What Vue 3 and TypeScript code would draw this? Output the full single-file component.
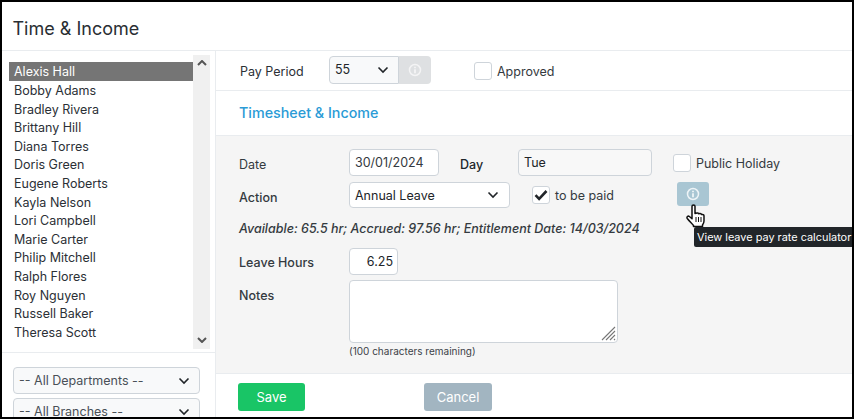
<script setup lang="ts">
const people: string[] = [
  'Alexis Hall', 'Bobby Adams', 'Bradley Rivera', 'Brittany Hill', 'Diana Torres',
  'Doris Green', 'Eugene Roberts', 'Kayla Nelson', 'Lori Campbell', 'Marie Carter',
  'Philip Mitchell', 'Ralph Flores', 'Roy Nguyen', 'Russell Baker', 'Theresa Scott',
]
</script>

<template>
  <div class="frame">
    <header class="title"><h1>Time &amp; Income</h1></header>
    <div class="body">
      <aside class="side">
        <div class="list-wrap">
          <ul class="list">
            <li v-for="(p, i) in people" :key="p" :class="{ sel: i === 0 }">{{ p }}</li>
          </ul>
          <div class="scroll">
            <svg width="10" height="6" viewBox="0 0 10 6"><path d="M1 5l4-4 4 4" fill="none" stroke="#555" stroke-width="2"/></svg>
            <svg width="10" height="6" viewBox="0 0 10 6"><path d="M1 1l4 4 4-4" fill="none" stroke="#555" stroke-width="2"/></svg>
          </div>
        </div>
        <div class="filters">
          <div class="select filter">-- All Departments --<svg class="chev" width="12" height="8" viewBox="0 0 12 8"><path d="M1.5 1.5L6 6l4.500-4.500" fill="none" stroke="#212529" stroke-width="1.600"/></svg></div>
          <div class="select filter">-- All Branches --<svg class="chev" width="12" height="8" viewBox="0 0 12 8"><path d="M1.5 1.5L6 6l4.500-4.500" fill="none" stroke="#212529" stroke-width="1.600"/></svg></div>
        </div>
      </aside>

      <main class="main">
        <div class="period">
          <span class="period-label">Pay Period</span>
          <div class="period-group">
            <div class="select period-select">55<svg class="chev" width="12" height="8" viewBox="0 0 12 8"><path d="M1.5 1.5L6 6l4.500-4.500" fill="none" stroke="#212529" stroke-width="1.600"/></svg></div>
            <span class="period-info">
              <svg width="14" height="14" viewBox="0 0 14 14"><circle cx="7" cy="7" r="5.500" fill="none" stroke="#f4f4f5" stroke-width="1.500"/><path d="M7 3.800v1.400M7 6.200v4" stroke="#f4f4f5" stroke-width="1.800"/></svg>
            </span>
          </div>
          <label class="check approved"><span class="box"></span><span class="check-text">Approved</span></label>
        </div>

        <h2 class="section">Timesheet &amp; Income</h2>

        <section class="panel">
          <div class="row row-date">
            <span class="label">Date</span>
            <div class="field date">30/01/2024</div>
            <span class="day-label">Day</span>
            <div class="field day">Tue</div>
            <label class="check holiday"><span class="box"></span><span class="check-text">Public Holiday</span></label>
          </div>
          <div class="row row-action">
            <span class="label medium">Action</span>
            <div class="select action">Annual Leave<svg class="chev" width="12" height="8" viewBox="0 0 12 8"><path d="M1.5 1.5L6 6l4.500-4.500" fill="none" stroke="#212529" stroke-width="1.600"/></svg></div>
            <label class="check paid">
              <span class="box">
                <svg width="14" height="12" viewBox="0 0 14 12"><path d="M1.500 6.200l3.600 3.600L12.500 2" fill="none" stroke="#212529" stroke-width="2.600"/></svg>
              </span>to be paid
            </label>
            <span class="calc">
              <svg width="14" height="14" viewBox="0 0 14 14"><circle cx="7" cy="7" r="5.500" fill="none" stroke="#eef4f7" stroke-width="1.500"/><path d="M7 3.800v1.400M7 6.200v4" stroke="#eef4f7" stroke-width="1.800"/></svg>
            </span>
          </div>
          <p class="avail">Available: 65.5 hr; Accrued: 97.56 hr; Entitlement Date: 14/03/2024</p>
          <div class="row row-hours">
            <span class="label medium">Leave Hours</span>
            <div class="field hours">6.25</div>
          </div>
          <div class="row row-notes">
            <span class="label medium notes-label">Notes</span>
            <div class="notes-col">
              <div class="notes">
                <svg class="grip" width="15" height="15" viewBox="0 0 15 15"><path d="M14 1L1 14M14 5L5 14M14 9L9 14M14 13l-1 1" stroke="#777" stroke-width="1.100"/></svg>
              </div>
              <small class="remain">(100 characters remaining)</small>
            </div>
          </div>
        </section>

        <footer class="actions">
          <button class="btn save">Save</button>
          <button class="btn cancel">Cancel</button>
        </footer>

        <!-- pointer + tooltip sit over the form -->
        <svg class="hand" width="19" height="24" viewBox="0 0 19 24">
          <path d="M6 2.200C6 .6 9 .6 9 2.200V9.500l2-.5c1-.2 1.500.3 1.500.8l1.500-.2c1-.1 1.400.5 1.400 1l1-.1c1-.1 1.600.6 1.600 1.500v5c0 1.500-.6 2.700-1.500 4v1.500H7.500V21.500C6 19.500 3.500 17.500 1.300 14.500c-1-1.500.7-3 2.100-2l2.600 2.200z" fill="#fff" stroke="#111" stroke-width="1.500" stroke-linejoin="round"/>
          <path d="M10 13v5M12.500 13v5M15 13v5" stroke="#111" stroke-width="1"/>
        </svg>
        <div class="tip">View leave pay rate calculator</div>
      </main>
    </div>
  </div>
</template>

<style>
html, body { margin: 0; background: #fff; }
</style>

<style scoped>
* { box-sizing: border-box; }
.frame {
  width: 854px;
  height: 419px;
  overflow: hidden;
  border: 2px solid #000;
  background: #fff;
  font-family: Inter, "Liberation Sans", sans-serif;
  font-size: 12.5px;
  color: #212529;
  display: flex;
  flex-direction: column;
}
.title {
  height: 49px;
  flex: none;
  border-bottom: 1px solid #e9ecef;
  padding: 15px 0 0 10.500px;
}
h1 { margin: 0; font-size: 18px; line-height: 24px; font-weight: 400; color: #2a2e33; }
.body { flex: 1; display: flex; min-height: 0; }

.side { width: 214px; flex: none; border-right: 1px solid #e9ecef; }
.list-wrap { height: 302px; border-bottom: 1px solid #e9ecef; display: flex; padding: 4px 4px 0 7px; }
.list { list-style: none; margin: 7px 0 0; padding: 0; width: 184px; flex: none; }
.list li { height: 18.600px; line-height: 18.600px; padding: 1px 0 0 5px; color: #2b3036; white-space: nowrap; }
.list li.sel { background: #757575; color: #fff; height: 19px; }
.scroll {
  width: 17px; height: 294px; background: #f0f0f0;
  display: flex; flex-direction: column; justify-content: space-between; align-items: center;
  padding: 5px 0 6px;
}
.filters { padding: 14px 0 0 11px; display: flex; flex-direction: column; gap: 4px; }

.select {
  position: relative;
  height: 27px; line-height: 25px;
  border: 1px solid #ced4da; border-radius: 4px;
  padding-left: 5px; background: #f8f9fa;
  white-space: nowrap;
}
.chev { position: absolute; right: 9px; top: 9px; }
.filter { width: 187px; color: #495057; }

.main { flex: 1; position: relative; display: flex; flex-direction: column; min-width: 0; }
.period { height: 40px; flex: none; border-bottom: 1px solid #e9ecef; display: flex; align-items: center; padding-left: 24px; }
.period-label { width: 89px; color: #2b3036; padding-top: 2px; }
.period-group { display: flex; height: 28px; margin-top: -2px; }
.period-select { width: 70px; height: 28px; line-height: 25px; border-radius: 4px 0 0 4px; }
.period-info { width: 32px; background: #dee0e2; border-radius: 0 4px 4px 0; display: flex; align-items: center; justify-content: center; }
.approved { margin-left: 43px; }
.check { display: flex; align-items: center; gap: 5px; color: #343a40; }
.check-text { padding-top: 2px; }
.box { width: 18px; height: 18px; border: 1px solid #ced4da; border-radius: 3px; background: #fff; display: flex; align-items: center; justify-content: center; flex: none; }

.section { margin: 0; height: 45px; flex: none; padding: 13px 0 0 23px; font-size: 14.300px; line-height: 18px; font-weight: 500; color: #2a9bd6; border-bottom: 1px solid #e9ecef; }

.panel { height: 238px; flex: none; background: #f5f5f5; border-bottom: 1px solid #e9ecef; padding: 13px 0 0 23px; }
.row { display: flex; align-items: center; }
.label { width: 110px; flex: none; color: #343a40; padding-top: 2px; }
.row-date .label { padding-top: 4px; }
.medium { font-weight: 500; }
.field { height: 27px; line-height: 25px; border: 1px solid #ced4da; border-radius: 4px; background: #fff; padding-left: 5px; }
.date { width: 90px; color: #343a40; }
.day-label { width: 58px; margin-left: 21px; font-weight: 500; padding-top: 4px; }
.day { width: 134px; background: #f8f8f8; }
.holiday { margin-left: 21px; }
.row-action { margin-top: 6px; height: 26px; }
.row-action .label { padding-top: 4px; }
.action { width: 161px; height: 26px; line-height: 25px; background: #fff; }
.action .chev { right: 10px; top: 8px; }
.paid { margin-left: 22px; }
.calc { margin-left: 63px; margin-top: -3px; width: 32px; height: 24px; background: #a9c6d3; border-radius: 3px; display: flex; align-items: center; justify-content: center; }
.avail { margin: 12px 0 0; line-height: 18px; font-style: italic; font-weight: 500; color: #343a40; font-size: 12.500px; }
.row-hours { margin-top: 9px; height: 28px; }
.hours { width: 49px; height: 27px; text-align: right; padding-right: 4px; }
.row-notes { margin-top: 5px; align-items: flex-start; }
.notes-label { padding-top: 8px; }
.notes { width: 269px; height: 63px; border: 1px solid #ced4da; border-radius: 4px; background: #fff; position: relative; }
.grip { position: absolute; right: 1px; bottom: 1px; }
.remain { display: block; font-size: 10px; line-height: 14px; color: #3c4248; margin-top: 1px; padding-left: 0; }

.actions { flex: 1; display: flex; padding: 9px 0 0 22px; gap: 119px; align-items: flex-start; }
.btn { border: 0; border-radius: 3px; height: 28px; color: #fff; font: 400 13px Inter, "Liberation Sans", sans-serif; }
.save { width: 67px; background: #19c566; }
.cancel { width: 68px; background: #a2b5c1; }

.hand { position: absolute; left: 470px; top: 153px; }
.tip { position: absolute; left: 478px; top: 176px; width: 160px; height: 20px; background: #212529; color: #fff; font-size: 10.900px; line-height: 20px; padding-left: 3px; white-space: nowrap; overflow: hidden; border-radius: 2px 0 0 2px; }
</style>
